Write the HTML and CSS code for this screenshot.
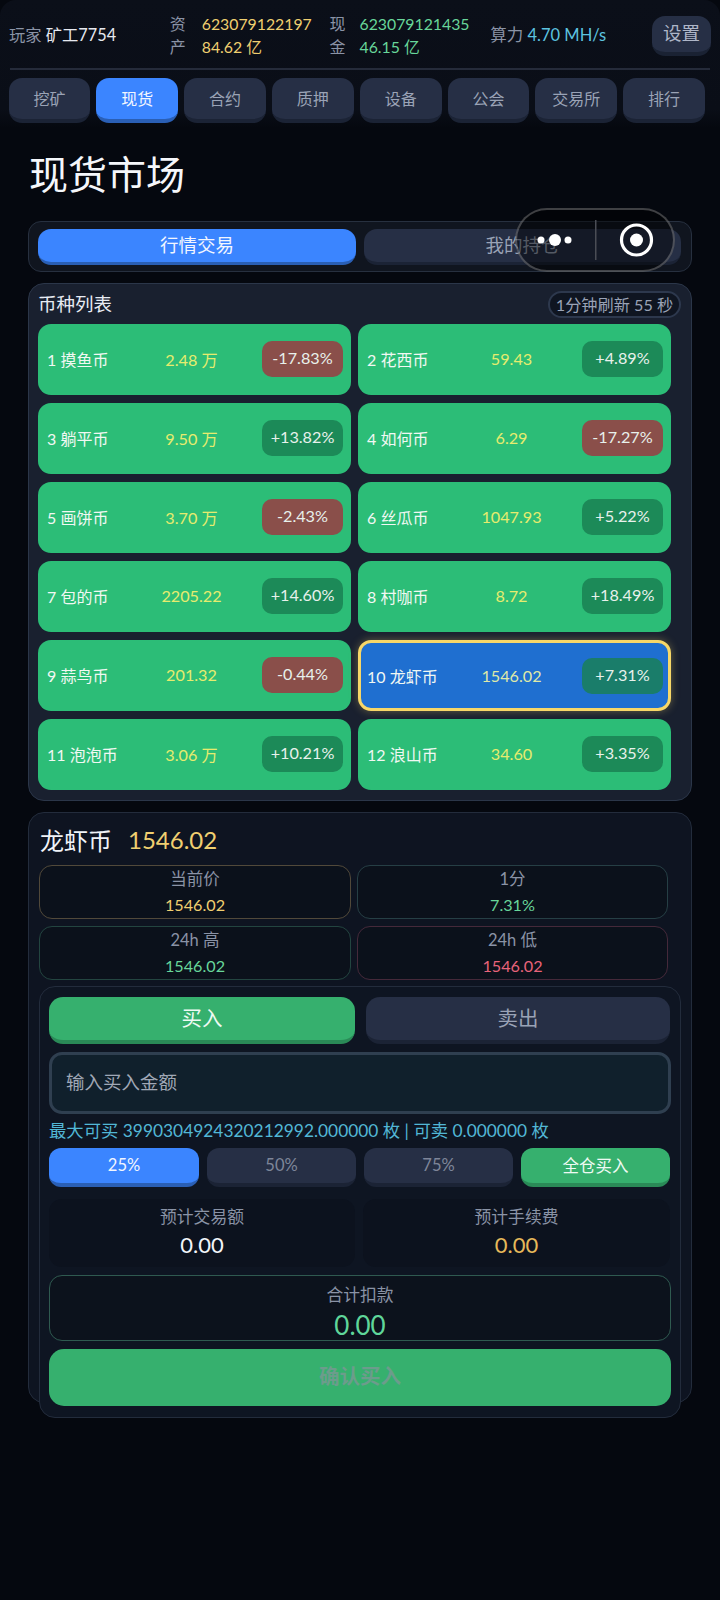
FILE: index.html
```html
<!DOCTYPE html>
<html lang="zh">
<head>
<meta charset="utf-8">
<title>现货市场</title>
<link rel="stylesheet" href="styles.css">
</head>
<body>
<div class="page">
  <div class="topwrap">
    <header class="top">
      <div class="player"><span class="dim">玩家</span> 矿工7754</div>
      <div class="money m1">
        <div class="vlabel"><span>资</span><span>产</span></div>
        <div class="vals gold"><span>623079122197</span><span>84.62 亿</span></div>
      </div>
      <div class="money m2">
        <div class="vlabel"><span>现</span><span>金</span></div>
        <div class="vals mint"><span>623079121435</span><span>46.15 亿</span></div>
      </div>
      <div class="hash"><span class="dim">算力</span> <span class="cyan">4.70 MH/s</span></div>
      <button class="settings">设置</button>
    </header>
    <div class="rule"></div>
    <nav class="tabs">
      <button class="tab">挖矿</button>
      <button class="tab on">现货</button>
      <button class="tab">合约</button>
      <button class="tab">质押</button>
      <button class="tab">设备</button>
      <button class="tab">公会</button>
      <button class="tab">交易所</button>
      <button class="tab">排行</button>
    </nav>
  </div>
  <main class="main">
    <h1 class="title">现货市场</h1>
    <section class="seg">
      <button class="segbtn on">行情交易</button>
      <button class="segbtn">我的持仓</button>
    </section>
    <section class="list">
      <div class="listhead">
        <span class="listtitle">币种列表</span>
        <span class="pill">1分钟刷新 55 秒</span>
      </div>
      <div class="coins">
        <div class="coin"><span class="name">1 摸鱼币</span><span class="price">2.48 万</span><span class="chg down">-17.83%</span></div>
        <div class="coin"><span class="name">2 花西币</span><span class="price">59.43</span><span class="chg up">+4.89%</span></div>
        <div class="coin"><span class="name">3 躺平币</span><span class="price">9.50 万</span><span class="chg up">+13.82%</span></div>
        <div class="coin"><span class="name">4 如何币</span><span class="price">6.29</span><span class="chg down">-17.27%</span></div>
        <div class="coin"><span class="name">5 画饼币</span><span class="price">3.70 万</span><span class="chg down">-2.43%</span></div>
        <div class="coin"><span class="name">6 丝瓜币</span><span class="price">1047.93</span><span class="chg up">+5.22%</span></div>
        <div class="coin"><span class="name">7 包的币</span><span class="price">2205.22</span><span class="chg up">+14.60%</span></div>
        <div class="coin"><span class="name">8 村咖币</span><span class="price">8.72</span><span class="chg up">+18.49%</span></div>
        <div class="coin"><span class="name">9 蒜鸟币</span><span class="price">201.32</span><span class="chg down">-0.44%</span></div>
        <div class="coin sel"><span class="name">10 龙虾币</span><span class="price">1546.02</span><span class="chg up">+7.31%</span></div>
        <div class="coin"><span class="name">11 泡泡币</span><span class="price">3.06 万</span><span class="chg up">+10.21%</span></div>
        <div class="coin"><span class="name">12 浪山币</span><span class="price">34.60</span><span class="chg up">+3.35%</span></div>
      </div>
    </section>
    <section class="detail">
      <div class="dhead"><span class="dname">龙虾币</span><span class="dprice">1546.02</span></div>
      <div class="stats">
        <div class="stat s-gold"><span class="slabel">当前价</span><span class="sval gold">1546.02</span></div>
        <div class="stat s-teal"><span class="slabel">1分</span><span class="sval mint">7.31%</span></div>
        <div class="stat s-green"><span class="slabel">24h 高</span><span class="sval mint">1546.02</span></div>
        <div class="stat s-red"><span class="slabel">24h 低</span><span class="sval red">1546.02</span></div>
      </div>
      <div class="trade">
        <div class="sides">
          <button class="side buy">买入</button>
          <button class="side">卖出</button>
        </div>
        <div class="input">输入买入金额</div>
        <div class="info">最大可买 3990304924320212992.000000 枚 | 可卖 0.000000 枚</div>
        <div class="pcts">
          <button class="pct on">25%</button>
          <button class="pct">50%</button>
          <button class="pct">75%</button>
          <button class="pct all">全仓买入</button>
        </div>
        <div class="ests">
          <div class="est"><span class="elabel">预计交易额</span><span class="eval">0.00</span></div>
          <div class="est"><span class="elabel">预计手续费</span><span class="eval fee">0.00</span></div>
        </div>
        <div class="total"><span class="elabel">合计扣款</span><span class="tval">0.00</span></div>
        <button class="confirm">确认买入</button>
      </div>
    </section>
  </main>
  <div class="capsule">
    <svg class="capsvg" width="160" height="64" viewBox="0 0 160 64" aria-hidden="true">
      <circle cx="26" cy="32" r="3.5" fill="#fff"/>
      <circle cx="40" cy="32" r="6" fill="#fff"/>
      <circle cx="53" cy="32" r="3.5" fill="#fff"/>
      <rect x="80" y="12" width="1.5" height="40" fill="#4a4d55"/>
      <circle cx="121.500" cy="32" r="15" fill="none" stroke="#fff" stroke-width="3.200"/>
      <circle cx="121.500" cy="32" r="6.500" fill="#fff"/>
    </svg>
  </div>
</div>
</body>
</html>
```
FILE: styles.css
```css
* { box-sizing: border-box; }
html, body { margin: 0; padding: 0; }
body {
  background: #05080f;
  color: #e8ecf4;
  font-family: Lato, "Noto Sans CJK SC", sans-serif;
  font-size: 16px;
}
button { font: inherit; border: 0; padding: 0; color: inherit; }
.page { position: relative; width: 720px; height: 1600px; overflow: hidden; }

.topwrap {
  height: 128px;
  background: linear-gradient(#0b0f19, #0a0e17 85%, #05080f);
  border-radius: 16px 16px 0 0;
}
.top {
  height: 68px;
  padding: 0 9px 0 9px;
  display: flex;
  align-items: center;
}
.rule { height: 2px; margin: 0 10px; background: #252b3a; }
.player { width: 161px; font-size: 16.300px; color: #e6e9f0; white-space: nowrap; }
.dim { color: #8a93a6; }
.money { display: flex; line-height: 23px; padding-top: 2px; }
.m1 { width: 160px; gap: 16px; }
.m2 { width: 160px; gap: 14px; }
.vlabel { display: flex; flex-direction: column; color: #8a93a6; }
.vals { display: flex; flex-direction: column; white-space: nowrap; font-size: 15.800px; }
.gold { color: #f0cf70; }
.mint { color: #68d69a; }
.red { color: #e8637a; }
.cyan { color: #5cc4e0; }
.hash { white-space: nowrap; width: 163px; font-size: 16.500px; padding-left: 1px; }
.settings {
  width: 59px;
  height: 40px;
  margin-top: 3px;
  padding-bottom: 3px;
  background: #262f45;
  border-bottom: 4px solid #1a2233;
  border-radius: 13px;
  color: #aeb6c8;
  font-size: 18.500px;
  flex: none;
}

.tabs {
  margin: 8px 15px 0 8.500px;
  display: grid;
  grid-template-columns: repeat(8, 1fr);
  gap: 6px;
}
.tab {
  height: 45px;
  padding-bottom: 2px;
  background: #262f45;
  border-bottom: 4px solid #1b2335;
  border-radius: 13px;
  color: #9aa3b6;
  font-size: 16px;
}
.tab.on { background: #3b85ff; border-bottom-color: #2a5fb5; color: #f2f6ff; }

.main { padding: 0 0 0 28px; }
.title {
  margin: 23px 0 24px 1px;
  height: 46px;
  font-size: 39px;
  line-height: 46px;
  font-weight: 400;
  color: #f5f7fb;
}

.seg {
  width: 664px;
  height: 51px;
  padding: 7px 10px 0 9px;
  border: 1px solid #27303f;
  border-radius: 13px;
  background: #10151f;
  display: grid;
  grid-template-columns: 318px 317px;
  gap: 8px;
}
.segbtn {
  height: 36px;
  padding-bottom: 3px;
  border-radius: 13px;
  background: #262f45;
  border-bottom: 3px solid #1b2335;
  color: #9aa3b6;
  font-size: 18.500px;
}
.segbtn.on { background: #3b85ff; border-bottom-color: #2a5fb5; color: #f2f6ff; }

.list {
  width: 664px;
  height: 518px;
  margin-top: 11px;
  padding: 7px 10px 0 9px;
  border: 1px solid #2b3649;
  border-radius: 16px;
  background: #19202f;
}
.listhead {
  height: 27px;
  margin-bottom: 6px;
  display: flex;
  justify-content: space-between;
  align-items: center;
}
.listtitle { font-size: 18.500px; color: #e8ecf4; padding-bottom: 4px; }
.pill {
  height: 27px;
  width: 133px;
  border: 2px solid #2d384d;
  border-radius: 14px;
  background: #0f1521;
  color: #9aa3b6;
  font-size: 16.200px;
  line-height: 23px;
  white-space: nowrap;
  text-align: center;
}
.coins {
  display: grid;
  grid-template-columns: 313px 313px;
  grid-auto-rows: 71px;
  gap: 8px 7px;
}
.coin {
  display: grid;
  grid-template-columns: 74px 125px 81px;
  gap: 8px;
  align-items: center;
  padding: 0 8px 2px 9px;
  background: #2cbd77;
  border-radius: 13px;
  font-size: 16px;
  white-space: nowrap;
}
.name { color: #f1f8f3; }
.price { text-align: center; color: #e6ec6e; font-size: 16.200px; }
.chg {
  height: 36px;
  border-radius: 10px;
  text-align: center;
  line-height: 34px;
  font-size: 16.200px;
  color: #e8f1ec;
}
.up { background: #1c8a58; }
.down { background: #8a4f4a; }
.sel {
  background: #1f6fd0;
  border: 3px solid #f7d768;
  padding: 0 5px 0 6px;
  box-shadow: 0 0 8px rgba(247, 215, 104, .35);
}
.sel .price { color: #dfe9a8; }
.sel .up { background: #1a7d6a; }

.detail {
  width: 664px;
  height: 591px;
  margin-top: 11px;
  padding: 0 0 0 10px;
  border: 1px solid #232c3c;
  border-radius: 16px;
  background: #0e1421;
}
.dhead {
  height: 52px;
  padding-left: 1px;
  display: flex;
  align-items: center;
  gap: 16px;
}
.dname { font-size: 24px; color: #f0f3f8; }
.dprice { font-size: 24px; color: #f0cf70; }
.stats {
  display: grid;
  grid-template-columns: 312px 311px;
  grid-auto-rows: 54px;
  gap: 7px 6px;
}
.stat {
  display: flex;
  flex-direction: column;
  align-items: center;
  justify-content: center;
  gap: 4px;
  border: 1px solid;
  border-radius: 13px;
  background: #0b111b;
  line-height: 22px;
}
.slabel { color: #8a93a6; font-size: 16.500px; }
.sval { font-size: 16.200px; }
.s-gold { border-color: #51493a; }
.s-teal { border-color: #263f45; }
.s-green { border-color: #234540; }
.s-red { border-color: #45293a; }

.trade {
  width: 642px;
  height: 432px;
  margin-top: 6px;
  padding: 10px 10px 0 9px;
  border: 1px solid #232c3c;
  border-radius: 16px;
  background: #0e1522;
  position: relative;
}
.sides {
  display: grid;
  grid-template-columns: 306px 304px;
  gap: 11px;
}
.side {
  height: 47px;
  padding-bottom: 3px;
  border-radius: 14px;
  background: #262f45;
  border-bottom: 4px solid #1b2335;
  color: #9aa3b6;
  font-size: 20.500px;
}
.side.buy { background: #36b06e; border-bottom-color: #2a8a57; color: #eefaf3; }
.input {
  width: 622px;
  height: 62px;
  margin-top: 8px;
  padding-left: 14px;
  border: 3px solid #2f3f50;
  border-radius: 13px;
  background: #10202c;
  color: #a0a8b6;
  font-size: 18.500px;
  line-height: 54px;
}
.info {
  margin-top: 6px;
  height: 22px;
  line-height: 22px;
  color: #52b7d6;
  font-size: 17.350px;
  white-space: nowrap;
}
.pcts {
  margin-top: 6px;
  display: grid;
  grid-template-columns: 150px 149px 149px 149px;
  gap: 8px;
}
.pct {
  height: 39px;
  padding-bottom: 2px;
  border-radius: 12px;
  background: #262f45;
  border-bottom: 4px solid #1b2335;
  color: #7e8699;
  font-size: 16.500px;
}
.pct.on { background: #3b85ff; border-bottom-color: #2a5fb5; color: #f2f6ff; }
.pct.all { background: #36b06e; border-bottom-color: #2a8a57; color: #eefaf3; }
.ests {
  margin-top: 12px;
  display: grid;
  grid-template-columns: 306px 307px;
  gap: 8px;
}
.est {
  height: 68px;
  display: flex;
  flex-direction: column;
  align-items: center;
  justify-content: center;
  border-radius: 13px;
  background: #0c121e;
}
.elabel { color: #8a93a6; font-size: 16.800px; line-height: 24px; }
.eval { font-size: 22px; line-height: 32px; color: #f2f5fa; }
.fee { color: #e6b95a; }
.total {
  width: 622px;
  height: 66px;
  margin-top: 8px;
  border: 1px solid #2f5a50;
  border-radius: 13px;
  background: #0c121c;
  display: flex;
  flex-direction: column;
  align-items: center;
}
.total .elabel { margin-top: 7px; }
.tval { font-size: 26px; line-height: 36px; color: #5fd69a; }
.confirm {
  display: block;
  width: 622px;
  height: 57px;
  margin-top: 8px;
  padding-bottom: 5px;
  border-radius: 15px;
  background: #36b06e;
  color: #6c9c8c;
  font-size: 20.500px;
  font-weight: 700;
}

.capsule {
  position: absolute;
  left: 515px;
  top: 208px;
  width: 160px;
  height: 64px;
  border: 2px solid rgba(255, 255, 255, .24);
  border-radius: 32px;
  background: rgba(0, 0, 0, .45);
}
.capsvg { position: absolute; left: -2px; top: -2px; display: block; }
```
